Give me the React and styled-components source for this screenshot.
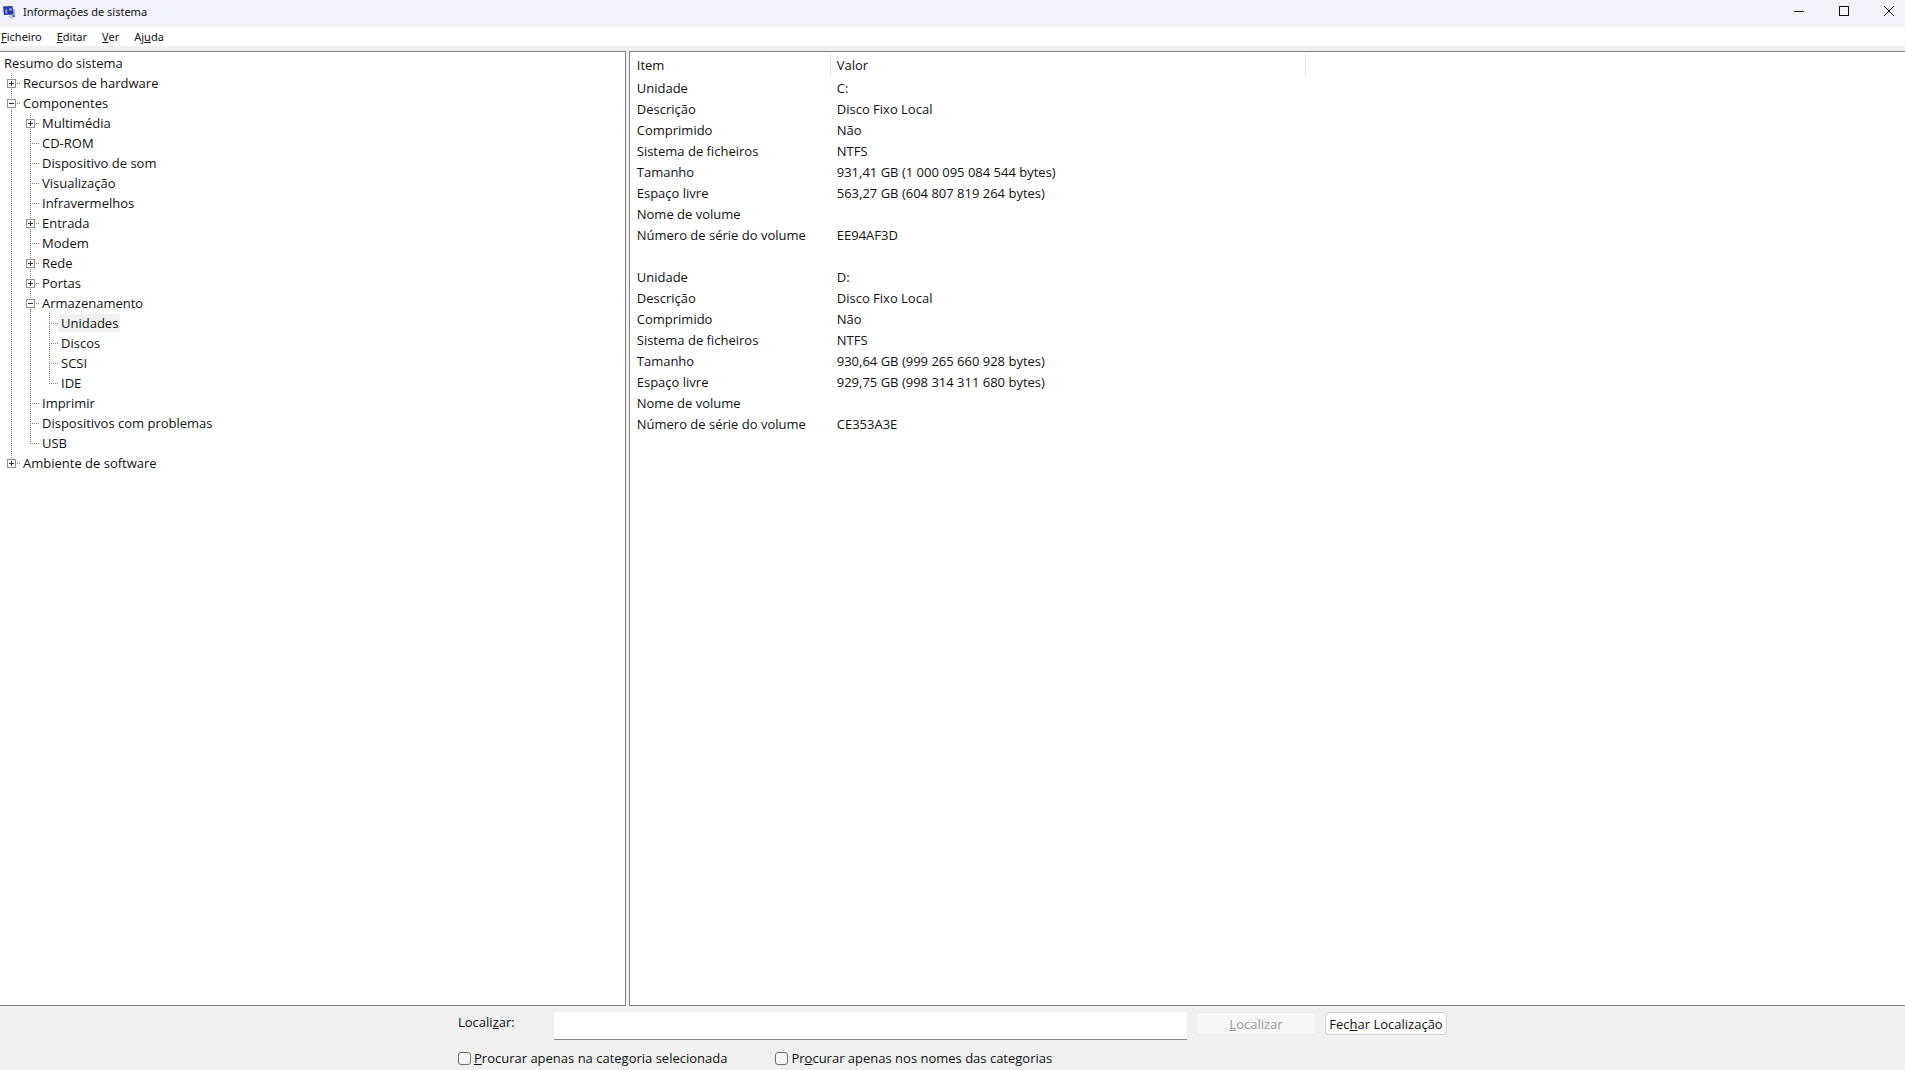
import React, { useId, useState } from "react";
import styled, { createGlobalStyle } from "styled-components";

const GlobalStyle = createGlobalStyle`
  *, *::before, *::after { box-sizing: border-box; }
  body {
    margin: 0;
    background: #f0f0f0;
    color: #111;
    font-family: "Open Sans", "Noto Sans", sans-serif;
    font-size: 13px;
  }
  button, input { font: inherit; color: inherit; }
`;

const Window = styled.div`
  display: flex;
  flex-direction: column;
  height: 100vh;
  overflow: hidden;
`;

const TitleBar = styled.header`
  display: flex;
  align-items: center;
  height: 27px;
  flex: none;
  padding-left: 2px;
  background: #f2f2fa;
`;

const Title = styled.h1`
  flex: 1;
  margin: 0 0 0 5px;
  padding-bottom: 4px;
  font-family: "Noto Sans", sans-serif;
  font-size: 11px;
  line-height: 16px;
  font-weight: 400;
`;

const CaptionButton = styled.button`
  display: flex;
  align-items: center;
  justify-content: center;
  width: 45px;
  height: 22px;
  margin-bottom: 5px;
  padding: 0;
  border: 0;
  background: transparent;
`;

const CaptionButtons = styled.div`
  display: flex;
  margin-right: -6px;
`;

const MenuBar = styled.nav`
  display: flex;
  gap: 14px;
  height: 19px;
  flex: none;
  background: #fff;
`;

const MenuItem = styled.button`
  padding: 0 0 0 1px;
  border: 0;
  background: transparent;
  font-family: "Noto Sans", sans-serif;
  font-size: 11px;
  line-height: 20px;
`;

const Panes = styled.main`
  display: grid;
  grid-template-columns: minmax(0, 329fr) minmax(0, 671fr);
  gap: 3px;
  flex: 1;
  min-height: 0;
  margin-top: 5px;
`;

const TreePane = styled.section`
  overflow: auto;
  padding: 1px 0 0 2px;
  border: 1px solid #828282;
  border-left: 0;
  background: #fff;
`;

const TreeList = styled.ul`
  margin: 0;
  padding: 0;
  list-style: none;
`;

const TreeRow = styled.div`
  display: flex;
  align-items: center;
  height: 20px;
`;

const Guide = styled.span`
  position: relative;
  width: 19px;
  height: 20px;
  flex: none;

  &::before {
    content: "";
    position: absolute;
    left: 9px;
    top: 0;
    width: 1px;
    height: ${(p) => (p.$trunk === "full" ? "20px" : p.$trunk === "half" ? "10px" : "0")};
    background: repeating-linear-gradient(#808080 0 1px, transparent 1px 2px);
  }

  &::after {
    content: "";
    position: absolute;
    left: 9px;
    top: 10px;
    width: ${(p) => (p.$branch ? "10px" : "0")};
    height: 1px;
    background: repeating-linear-gradient(90deg, #808080 0 1px, transparent 1px 2px);
  }
`;

const Expander = styled.button`
  position: absolute;
  z-index: 1;
  left: 5px;
  top: 6px;
  width: 9px;
  height: 9px;
  padding: 0;
  border: 1px solid #919191;
  background:
    linear-gradient(#333, #333) center / 5px 1px no-repeat,
    linear-gradient(#333, #333) center / 1px ${(p) => (p.$open ? "0" : "5px")} no-repeat,
    #fff;
`;

const TreeLabel = styled.span`
  padding: 0 2px;
  line-height: 18px;
  white-space: nowrap;
  background: ${(p) => (p.$selected ? "#f0f0f0" : "transparent")};
`;

const DetailPane = styled.section`
  overflow: auto;
  padding-top: 2px;
  border: 1px solid #828282;
  border-right: 0;
  background: #fff;
`;

const DetailTable = styled.table`
  border-collapse: separate;
  border-spacing: 0;
  table-layout: fixed;
  width: 676px;
`;

const ItemColumn = styled.col`
  width: 201px;
`;

const HeaderCell = styled.th`
  height: 23px;
  padding: 0 0 2px ${(p) => (p.$first ? "7px" : "6px")};
  border-right: 1px solid #e4e4e4;
  font-weight: 400;
  line-height: 20px;
  text-align: left;
`;

const Cell = styled.td`
  height: 21px;
  padding: 0 0 0 ${(p) => (p.$first ? "7px" : "6px")};
  line-height: 20px;
  white-space: nowrap;
`;

const FindBar = styled.form`
  display: grid;
  grid-template-columns: 96px minmax(0, 625px) 122px 122px;
  column-gap: 8px;
  justify-content: center;
  align-content: start;
  flex: none;
  height: 64px;
  padding-top: 6px;
`;

const FindField = styled.div`
  grid-column: 1 / 3;
  display: flex;
`;

const FindLabel = styled.label`
  width: 96px;
  flex: none;
  line-height: 20px;
`;

const FindInput = styled.input`
  flex: 1;
  min-width: 0;
  height: 28px;
  padding: 0 6px;
  border: 0;
  border-bottom: 1px solid #868686;
  border-radius: 3px 3px 0 0;
  background: #fff;
`;

const FindButton = styled.button`
  height: 23px;
  padding: 0;
  border: 1px solid #d0d0d0;
  border-radius: 4px;
  background: #fdfdfd;
  line-height: 20px;
  white-space: nowrap;

  &:disabled {
    border-color: #ececec;
    background: #f6f6f6;
    color: #9b9b9b;
  }
`;

const Options = styled.div`
  grid-column: 1 / -1;
  display: flex;
  gap: 48px;
  padding-top: 8px;
`;

const Option = styled.label`
  display: flex;
  align-items: center;
  gap: 3px;
  line-height: 20px;
`;

const CheckBox = styled.input`
  appearance: none;
  width: 13px;
  height: 13px;
  margin: 0;
  border: 1px solid #707070;
  border-radius: 3px;
  background: #f6f6f6;

  &:checked { background: #0067c0; }
`;

const TREE = [
  { label: "Recursos de hardware", children: [] },
  {
    label: "Componentes",
    open: true,
    children: [
      { label: "Multimédia", children: [] },
      { label: "CD-ROM" },
      { label: "Dispositivo de som" },
      { label: "Visualização" },
      { label: "Infravermelhos" },
      { label: "Entrada", children: [] },
      { label: "Modem" },
      { label: "Rede", children: [] },
      { label: "Portas", children: [] },
      {
        label: "Armazenamento",
        open: true,
        children: [
          { label: "Unidades", selected: true },
          { label: "Discos" },
          { label: "SCSI" },
          { label: "IDE" },
        ],
      },
      { label: "Imprimir" },
      { label: "Dispositivos com problemas" },
      { label: "USB" },
    ],
  },
  { label: "Ambiente de software", children: [] },
];

const ROWS = [
  ["Unidade", "C:"],
  ["Descrição", "Disco Fixo Local"],
  ["Comprimido", "Não"],
  ["Sistema de ficheiros", "NTFS"],
  ["Tamanho", "931,41 GB (1 000 095 084 544 bytes)"],
  ["Espaço livre", "563,27 GB (604 807 819 264 bytes)"],
  ["Nome de volume", ""],
  ["Número de série do volume", "EE94AF3D"],
  ["", ""],
  ["Unidade", "D:"],
  ["Descrição", "Disco Fixo Local"],
  ["Comprimido", "Não"],
  ["Sistema de ficheiros", "NTFS"],
  ["Tamanho", "930,64 GB (999 265 660 928 bytes)"],
  ["Espaço livre", "929,75 GB (998 314 311 680 bytes)"],
  ["Nome de volume", ""],
  ["Número de série do volume", "CE353A3E"],
];

function TreeNode({ node, trunks, last }) {
  const [open, setOpen] = useState(Boolean(node.open));
  return (
    <li role="treeitem" aria-selected={Boolean(node.selected)} aria-expanded={node.children ? open : undefined}>
      <TreeRow>
        {trunks.map((trunk, i) => (
          <Guide key={i} $trunk={trunk} />
        ))}
        <Guide $trunk={last ? "half" : "full"} $branch>
          {node.children && (
            <Expander type="button" $open={open} aria-label={node.label} onClick={() => setOpen(!open)} />
          )}
        </Guide>
        <TreeLabel $selected={node.selected}>{node.label}</TreeLabel>
      </TreeRow>
      {open && <Branch nodes={node.children} trunks={[...trunks, last ? "none" : "full"]} />}
    </li>
  );
}

function Branch({ nodes, trunks }) {
  return (
    <TreeList role="group">
      {nodes.map((node, i) => (
        <TreeNode key={node.label} node={node} trunks={trunks} last={i === nodes.length - 1} />
      ))}
    </TreeList>
  );
}

function AppIcon() {
  return (
    <svg width="16" height="20" viewBox="0 0 16 20" aria-hidden="true">
      <path d="M8 3.500 13 5v8l-4 1z" fill="#a9b4dc" />
      <path d="M1 2.500 10.500 2l1 8.500L2 11z" fill="#27379a" />
      <path d="M3 6.500 5 4l.5 5.500-2 .5zM7 4l2.500-.2.500 3-2.500.2z" fill="#7f95e6" />
      <path d="M5.500 12 11 10.500l3 2.500-5 2z" fill="#c3c9dd" />
      <path d="m10 11.500 2.500-.5.500 1.500-2 .5z" fill="#4256b0" />
    </svg>
  );
}

export default function App() {
  const findId = useId();
  return (
    <Window>
      <GlobalStyle />
      <TitleBar>
        <AppIcon />
        <Title>Informações de sistema</Title>
        <CaptionButtons>
          <CaptionButton type="button" aria-label="Minimizar">
            <svg width="10" height="10" viewBox="0 0 10 10"><path d="M0 5.500h10" stroke="#111" /></svg>
          </CaptionButton>
          <CaptionButton type="button" aria-label="Maximizar">
            <svg width="10" height="10" viewBox="0 0 10 10"><rect x=".5" y=".5" width="9" height="9" fill="none" stroke="#111" /></svg>
          </CaptionButton>
          <CaptionButton type="button" aria-label="Fechar">
            <svg width="10" height="10" viewBox="0 0 10 10"><path d="m0 0 10 10M10 0 0 10" stroke="#111" /></svg>
          </CaptionButton>
        </CaptionButtons>
      </TitleBar>
      <MenuBar>
        <MenuItem type="button"><u>F</u>icheiro</MenuItem>
        <MenuItem type="button"><u>E</u>ditar</MenuItem>
        <MenuItem type="button"><u>V</u>er</MenuItem>
        <MenuItem type="button">Aj<u>u</u>da</MenuItem>
      </MenuBar>
      <Panes>
        <TreePane>
          <TreeRow><TreeLabel>Resumo do sistema</TreeLabel></TreeRow>
          <TreeList role="tree">
            {TREE.map((node, i) => (
              <TreeNode key={node.label} node={node} trunks={[]} last={i === TREE.length - 1} />
            ))}
          </TreeList>
        </TreePane>
        <DetailPane>
          <DetailTable>
            <colgroup><ItemColumn /><col /></colgroup>
            <thead>
              <tr><HeaderCell $first>Item</HeaderCell><HeaderCell>Valor</HeaderCell></tr>
            </thead>
            <tbody>
              {ROWS.map(([item, value], i) => (
                <tr key={i}><Cell $first>{item}</Cell><Cell>{value}</Cell></tr>
              ))}
            </tbody>
          </DetailTable>
        </DetailPane>
      </Panes>
      <FindBar onSubmit={(e) => e.preventDefault()}>
        <FindField>
          <FindLabel htmlFor={findId}>Locali<u>z</u>ar:</FindLabel>
          <FindInput id={findId} type="text" />
        </FindField>
        <FindButton type="submit" disabled><u>L</u>ocalizar</FindButton>
        <FindButton type="button">Fec<u>h</u>ar Localização</FindButton>
        <Options>
          <Option><CheckBox type="checkbox" /><span><u>P</u>rocurar apenas na categoria selecionada</span></Option>
          <Option><CheckBox type="checkbox" /><span>Pr<u>o</u>curar apenas nos nomes das categorias</span></Option>
        </Options>
      </FindBar>
    </Window>
  );
}
